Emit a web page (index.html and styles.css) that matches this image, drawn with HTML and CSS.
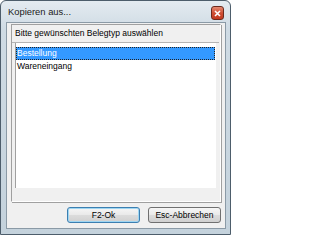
FILE: index.html
```html
<!DOCTYPE html>
<html>
<head>
<meta charset="utf-8">
<link rel="stylesheet" href="styles.css">
</head>
<body>
<div class="window">
  <div class="titlebar">
    <span class="title">Kopieren aus...</span>
    <span class="close"><svg width="7" height="7" viewBox="0 0 7 7"><path d="M1 1L6 6M6 1L1 6" stroke="#fff" stroke-width="1.6"/></svg></span>
  </div>
  <div class="client">
    <div class="panel">
      <div class="header">Bitte gewünschten Belegtyp auswählen</div>
      <div class="listbox">
        <div class="item selected">Bestellung</div>
        <div class="item">Wareneingang</div>
      </div>
    </div>
    <div class="buttons">
      <button class="btn default">F2-Ok</button>
      <button class="btn">Esc-Abbrechen</button>
    </div>
  </div>
</div>
</body>
</html>
```
FILE: styles.css
```css
html, body {
  margin: 0;
  padding: 0;
  background: #ffffff;
}
.window {
  box-sizing: border-box;
  width: 231px;
  height: 235px;
  border: 1px solid #4d5d6b;
  border-radius: 6px 6px 0 0;
  background: linear-gradient(180deg, #e4ebf1 0%, #cfdbe4 12%, #c4d2dc 100%);
  padding: 0 4px 5px 5px;
  display: flex;
  flex-direction: column;
}
.titlebar {
  height: 21px;
  display: flex;
  align-items: center;
  justify-content: space-between;
  padding-left: 2px;
}
.title {
  font-family: "Liberation Sans", Arial, sans-serif;
  font-size: 9.4px;
  color: #1a1a1a;
  margin-top: -1px;
}
.close {
  width: 11px;
  height: 12px;
  border: 1px solid #6b2a1e;
  border-radius: 3px;
  background: linear-gradient(180deg, #e58a72 0%, #cf4f35 50%, #c2391f 100%);
  display: flex;
  align-items: center;
  justify-content: center;
  margin-right: 2px;
  margin-top: 3px;
}
.client {
  flex: 1;
  border: 1px solid #8b9aa6;
  background: #f0f0f0;
  display: flex;
  flex-direction: column;
  padding: 1px 4px 0 4px;
  font-family: "Liberation Sans", Arial, sans-serif;
  font-size: 8.5px;
  color: #000;
}
.panel {
  height: 178px;
  box-sizing: border-box;
  border-top: 1px solid #a0a0a0;
  border-left: 1px solid #a0a0a0;
  border-right: 1px solid #ffffff;
  border-bottom: 1px solid #ffffff;
  box-shadow: 1px 1px 0 #a0a0a0;
  display: flex;
  flex-direction: column;
}
.header {
  height: 17px;
  padding-left: 3px;
  line-height: 17px;
  border-bottom: 1px solid #b4b4b4;
  margin-right: 1px;
}
.listbox {
  margin: 0 4px 13px 3px;
  flex: 1;
  background: #ffffff;
  border-left: 1px solid #a0a0a0;
  padding-top: 4px;
}
.item {
  height: 13px;
  line-height: 13px;
  padding-left: 1px;
  box-sizing: border-box;
  margin-right: 1px;
}
.selected {
  background: #3399ff;
  color: #ffffff;
  outline: 1px dotted #222;
  outline-offset: -1px;
}
.buttons {
  display: flex;
  justify-content: flex-end;
  gap: 8px;
  padding: 5px 0 0 0;
}
.btn {
  box-sizing: border-box;
  width: 73px;
  height: 16px;
  padding: 0;
  border: 1px solid #707070;
  border-radius: 3px;
  background: linear-gradient(180deg, #f6f6f6 0%, #e9e9e9 50%, #dcdcdc 51%, #d0d0d0 100%);
  font-family: "Liberation Sans", Arial, sans-serif;
  font-size: 8.5px;
  color: #000;
}
.btn.default {
  border-color: #3c7fb1;
  box-shadow: inset 0 0 0 1px #9fd6f2;
}
```
